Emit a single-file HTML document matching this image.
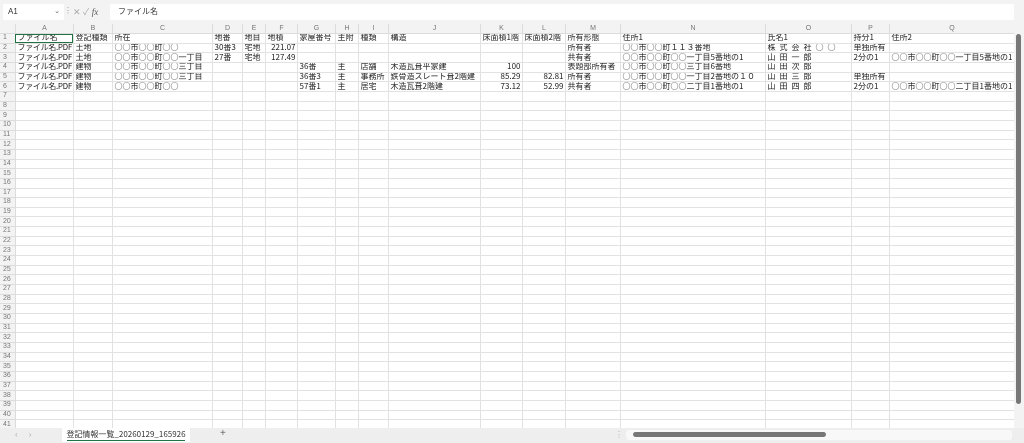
<!DOCTYPE html>
<html><head><meta charset="utf-8"><style>
*{margin:0;padding:0;box-sizing:border-box}
body{width:1024px;height:443px;overflow:hidden;background:#f3f3f3;font-family:"Liberation Sans","Noto Sans CJK JP",sans-serif;font-size:8px;color:#222;position:relative}
.j{font-family:"Noto Sans CJK JP",sans-serif}
.nb{position:absolute;left:3px;top:4px;width:61px;height:16px;background:#fff;border-radius:2px;font-size:8px;line-height:16px;padding-left:5px;color:#333}
.nb span{position:absolute;right:4px;color:#666;font-size:7px}
.fx{position:absolute;left:73px;top:5px;color:#aaa;font-size:9px}
.fb{position:absolute;left:110px;top:4px;width:904px;height:16px;background:#fff;border-radius:2px;line-height:16px;padding-left:8px;color:#333}
.grid{position:absolute;left:0;top:24px;width:1014px;height:404px;background:#fff;overflow:hidden}
table{border-collapse:collapse;table-layout:fixed;width:1014px}
td{border-right:1px solid #e2e2e2;border-bottom:1px solid #e2e2e2;height:9.66px;line-height:8px;white-space:nowrap;overflow:hidden;padding:0 1px 0 2px;font-size:8px;font-family:"Noto Sans CJK JP",sans-serif}
tr.h td{background:#f3f3f3;color:#777;text-align:center;height:9.5px;font-size:7px;border-color:#dcdcdc;font-family:"Liberation Sans",sans-serif}
td.r{background:#f3f3f3;color:#777;text-align:left;font-size:7px;padding-left:3px;border-color:#dcdcdc;font-family:"Liberation Sans",sans-serif}
.n{text-align:right}
.f{letter-spacing:-0.3px}
.o{letter-spacing:4px}
.sel{outline:1.5px solid #217346;outline-offset:-1px}
.vs{position:absolute;left:1014px;top:24px;width:10px;height:404px;background:#f3f3f3}
.vs .t{position:absolute;left:2px;top:10px;width:5px;height:370px;background:#777;border-radius:3px}
.tabs{position:absolute;left:0;top:428px;width:1024px;height:15px;background:#eeeeee}
.tab{position:absolute;left:62px;top:0;width:128px;height:14px;background:#fff;text-align:center;line-height:13px;color:#333;font-size:8px;font-family:"Noto Sans CJK JP",sans-serif}
.tab i{position:absolute;left:5px;right:5px;bottom:1px;height:1.5px;background:#217346}
.hs{position:absolute;left:626px;top:430px;width:386px;height:10px;background:#f8f8f8;border-radius:3px}
.hs .t{position:absolute;left:7px;top:2px;width:193px;height:5px;background:#777;border-radius:3px}
</style></head><body>
<div class="nb">A1<span>⌄</span></div>
<div style="position:absolute;left:64px;top:6px;color:#999;font-size:8px">⋮</div>
<div class="fx">✕ ✓ <i style="color:#555;font-family:'Liberation Serif',serif">fx</i></div>
<div class="fb j">ファイル名</div>
<div class="grid"><table>
<colgroup><col style="width:15px"><col style="width:58px"><col style="width:39px"><col style="width:100px"><col style="width:30px"><col style="width:23px"><col style="width:32px"><col style="width:38px"><col style="width:23px"><col style="width:30px"><col style="width:92px"><col style="width:42px"><col style="width:43px"><col style="width:55px"><col style="width:145px"><col style="width:86px"><col style="width:38px"><col style="width:125px"></colgroup>
<tr class="h"><td></td><td>A</td><td>B</td><td>C</td><td>D</td><td>E</td><td>F</td><td>G</td><td>H</td><td>I</td><td>J</td><td>K</td><td>L</td><td>M</td><td>N</td><td>O</td><td>P</td><td>Q</td></tr>
<tr><td class="r">1</td><td class="sel">ファイル名</td><td>登記種類</td><td>所在</td><td>地番</td><td>地目</td><td>地積</td><td>家屋番号</td><td>主附</td><td>種類</td><td>構造</td><td>床面積1階</td><td>床面積2階</td><td>所有形態</td><td>住所1</td><td>氏名1</td><td>持分1</td><td>住所2</td></tr>
<tr><td class="r">2</td><td class="f">ファイル名.PDF</td><td>土地</td><td>○○市○○町○○</td><td>30番3</td><td>宅地</td><td class="n">221.07</td><td></td><td></td><td></td><td></td><td></td><td></td><td>所有者</td><td>○○市○○町１１３番地</td><td class="o">株式会社○○</td><td>単独所有</td><td></td></tr>
<tr><td class="r">3</td><td class="f">ファイル名.PDF</td><td>土地</td><td>○○市○○町○○一丁目</td><td>27番</td><td>宅地</td><td class="n">127.49</td><td></td><td></td><td></td><td></td><td></td><td></td><td>共有者</td><td>○○市○○町○○一丁目5番地の1</td><td class="o">山田一郎</td><td>2分の1</td><td>○○市○○町○○一丁目5番地の1</td></tr>
<tr><td class="r">4</td><td class="f">ファイル名.PDF</td><td>建物</td><td>○○市○○町○○三丁目</td><td></td><td></td><td></td><td>36番</td><td>主</td><td>店舗</td><td>木造瓦葺平家建</td><td class="n">100</td><td></td><td>表題部所有者</td><td>○○市○○町○○三丁目6番地</td><td class="o">山田次郎</td><td></td><td></td></tr>
<tr><td class="r">5</td><td class="f">ファイル名.PDF</td><td>建物</td><td>○○市○○町○○三丁目</td><td></td><td></td><td></td><td>36番3</td><td>主</td><td>事務所</td><td>鉄骨造スレート葺2階建</td><td class="n">85.29</td><td class="n">82.81</td><td>所有者</td><td>○○市○○町○○一丁目2番地の１０</td><td class="o">山田三郎</td><td>単独所有</td><td></td></tr>
<tr><td class="r">6</td><td class="f">ファイル名.PDF</td><td>建物</td><td>○○市○○町○○</td><td></td><td></td><td></td><td>57番1</td><td>主</td><td>居宅</td><td>木造瓦葺2階建</td><td class="n">73.12</td><td class="n">52.99</td><td>共有者</td><td>○○市○○町○○二丁目1番地の1</td><td class="o">山田四郎</td><td>2分の1</td><td>○○市○○町○○二丁目1番地の1</td></tr>
<script>
for(let i=7;i<=42;i++){document.write('<tr><td class="r">'+i+'</td>'+'<td></td>'.repeat(17)+'</tr>')}
</script>
</table></div>
<div class="vs"><div class="t"></div></div>
<div class="tabs">
<div style="position:absolute;left:15px;top:2px;color:#aaa">‹&nbsp;&nbsp;&nbsp;&nbsp;&nbsp;›</div>
<div class="tab">登記情報一覧_20260129_165926<i></i></div>
<div style="position:absolute;left:220px;top:0px;color:#666;font-size:10px">+</div>
<div style="position:absolute;left:615px;top:2px;color:#aaa">⋮</div>
</div>
<div class="hs"><div class="t"></div></div>
</body></html>
